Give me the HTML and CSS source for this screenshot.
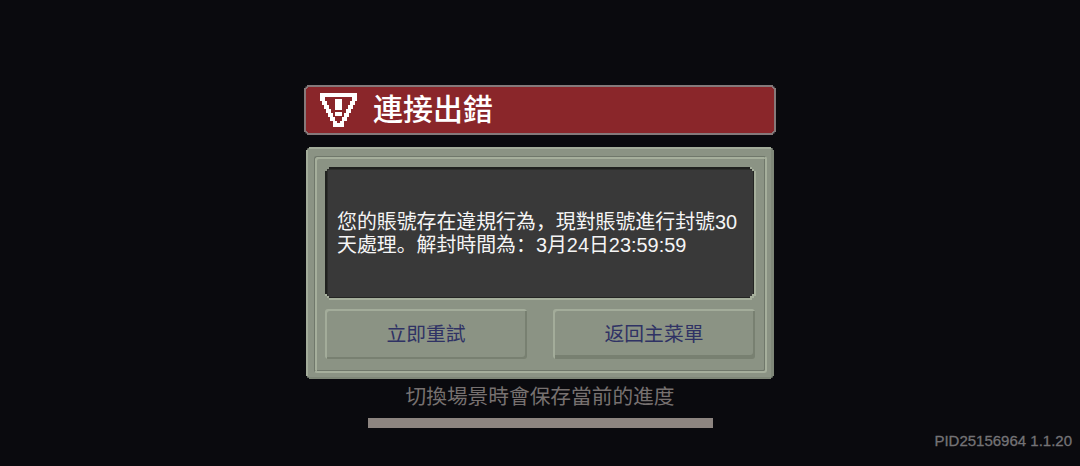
FILE: index.html
```
<!DOCTYPE html>
<html lang="zh-CN">
<head>
    <meta charset="utf-8">
    <title>連接出錯</title>
    <link rel="stylesheet" href="styles.css">
</head>
<body>
    <main class="dialog">
        <header class="banner">
            <div class="banner-inner">
                <svg class="warning" viewBox="0 0 37 35" width="37" height="35" shape-rendering="crispEdges">
                    <path fill="#fff" fill-rule="evenodd" d="M0 0H37V8H35V12H33V16H31V20H29V24H27V28H24V34H13V28H10V24H8V20H6V16H4V12H2V8H0Z M5 4V8H7V12H9V16H11V20H13V24H15V28H17V30H20V28H22V24H24V20H26V16H28V12H30V8H32V4Z"/>
                    <path fill="#fff" d="M15 6H22V17H15Z M15 19H22V23H15Z"/>
                </svg>
                <h1>連接出錯</h1>
            </div>
        </header>

        <section class="panel">
            <div class="groove">
                <div class="screen-edge">
                    <div class="screen">
                        <p>您的賬號存在違規行為，現對賬號進行封號30<br>天處理。解封時間為：3月24日23:59:59</p>
                    </div>
                </div>
                <div class="buttons">
                    <button type="button">立即重試</button>
                    <button type="button" class="raised">返回主菜單</button>
                </div>
            </div>
        </section>

        <p class="hint">切換場景時會保存當前的進度</p>
        <div class="progress"></div>
    </main>
    <footer class="version">PID25156964 1.1.20</footer>
</body>
</html>
```

FILE: styles.css
```
* {
    box-sizing: border-box;
}

body {
    margin: 0;
    height: 466px;
    overflow: hidden;
    display: flex;
    flex-direction: column;
    background: #0a0a0e;
    font-family: "Liberation Sans", "Noto Sans CJK SC", sans-serif;
}

h1, p {
    margin: 0;
}

.dialog {
    display: flex;
    flex-direction: column;
    align-items: center;
    padding-top: 85px;
}

/* Stepped pixel corners */
.banner, .banner-inner, .panel, .screen-edge, .screen {
    --s: 1px;
    --l: calc(var(--s) * 2);
    clip-path: polygon(0 var(--l), var(--s) var(--l), var(--s) var(--s), var(--l) var(--s), var(--l) 0,
        calc(100% - var(--l)) 0, calc(100% - var(--l)) var(--s), calc(100% - var(--s)) var(--s), calc(100% - var(--s)) var(--l), 100% var(--l),
        100% calc(100% - var(--l)), calc(100% - var(--s)) calc(100% - var(--l)), calc(100% - var(--s)) calc(100% - var(--s)), calc(100% - var(--l)) calc(100% - var(--s)), calc(100% - var(--l)) 100%,
        var(--l) 100%, var(--l) calc(100% - var(--s)), var(--s) calc(100% - var(--s)), var(--s) calc(100% - var(--l)), 0 calc(100% - var(--l)));
}

.banner, .panel {
    --s: 1.5px;
}

.screen-edge, .screen {
    --s: 2px;
}

.banner {
    width: 472px;
    height: 50px;
    padding: 2px;
    background: #85797a;
}

.banner-inner {
    display: flex;
    align-items: center;
    height: 46px;
    padding-left: 14px;
    background: #8a262a;
}

.warning {
    margin-top: 1px;
}

.banner h1 {
    margin: 0 0 1px 16px;
    font-size: 30px;
    line-height: 44px;
    font-weight: 500;
    color: #fff;
}

.panel {
    width: 468px;
    height: 232px;
    margin-top: 12px;
    padding: 9px 7px 6px 8px;
    background: #8b9384;
    box-shadow: inset 2px 2px #a3ac9a, inset -3px -2px #7f8778;
}

.groove {
    height: 217px;
    padding: 10px 9px 0 10px;
    border: 1px solid #70786b;
    border-right: 2px solid #a6af9c;
    border-bottom: 2px solid #a6af9c;
    border-radius: 3px;
    box-shadow: inset 2px 2px #a6af9c, inset -1px -1px #70786b;
}

.screen-edge {
    height: 133px;
    padding: 0 2px 2px 0;
    background: #a6af9c;
}

.screen {
    height: 131px;
    padding: 44px 0 0 12px;
    background: #393939;
    box-shadow: inset 2px 2px #20211f, inset 3px 3px #2c2d2b, inset -1px -1px #242523;
}

.screen p {
    font-size: 19.9px;
    line-height: 23px;
    white-space: nowrap;
    color: #f5f5f5;
}

.buttons {
    display: flex;
    justify-content: space-between;
    margin: 9px 1px 0 0;
}

.buttons button {
    width: 202px;
    height: 50px;
    padding: 0 0 3px;
    border: 0;
    border-radius: 3px;
    background: #8b9384;
    box-shadow: inset 2px 2px #a3ac9a, inset -2px -2px #788071;
    font-family: inherit;
    font-size: 19.8px;
    color: #2f3264;
}

.buttons .raised {
    box-shadow: inset 2px 2px #a3ac9a, inset -2px -4px #788071;
}

.hint {
    margin-top: 5px;
    font-size: 20.7px;
    line-height: 26px;
    color: #777170;
}

.progress {
    width: 345px;
    height: 10px;
    margin-top: 8px;
    background: #8d8580;
}

.version {
    align-self: flex-end;
    margin-top: 4px;
    padding-right: 8px;
    font-size: 15px;
    line-height: 18px;
    color: #747376;
    -webkit-text-stroke: 0.3px #747376;
}
```
